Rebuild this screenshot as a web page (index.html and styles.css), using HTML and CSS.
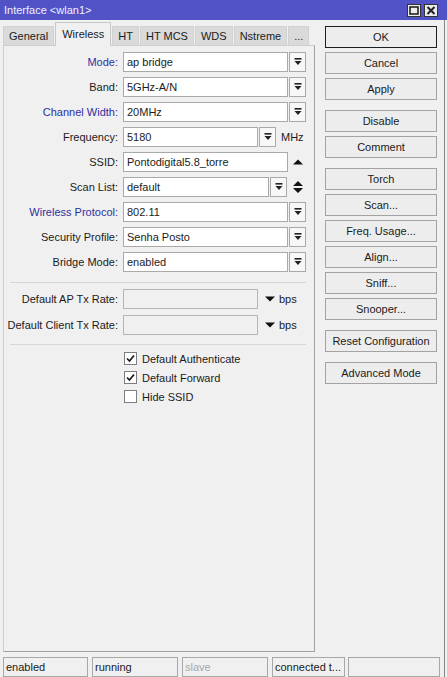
FILE: index.html
```html
<!DOCTYPE html>
<html>
<head>
<meta charset="utf-8">
<link rel="stylesheet" href="styles.css">
</head>
<body>
<div class="window">
  <div class="titlebar">
    <span class="title">Interface &lt;wlan1&gt;</span>
    <div class="tb-btns">
      <span class="tb-btn"><svg width="10" height="9" viewBox="0 0 10 9"><rect x="1" y="1" width="8" height="7" fill="none" stroke="#222" stroke-width="1.6"/></svg></span>
      <span class="tb-btn"><svg width="10" height="9" viewBox="0 0 10 9"><path d="M1.5 1 L8.5 8 M8.5 1 L1.5 8" stroke="#222" stroke-width="2"/></svg></span>
    </div>
  </div>
  <div class="content">
    <div class="main">
      <div class="left">
        <div class="tabs">
          <div class="tab">General</div>
          <div class="tab active">Wireless</div>
          <div class="tab">HT</div>
          <div class="tab">HT MCS</div>
          <div class="tab">WDS</div>
          <div class="tab">Nstreme</div>
          <div class="tab">...</div>
        </div>
        <div class="panel">
          <div class="row">
            <span class="lbl blue">Mode:</span>
            <div class="field w-full">ap bridge</div>
            <div class="dd"><svg width="8" height="8" viewBox="0 0 8 8"><rect x="0.5" y="0" width="7" height="1.6" fill="#222"/><path d="M0.5 3 H7.5 L4 7 Z" fill="#222"/></svg></div>
          </div>
          <div class="row">
            <span class="lbl">Band:</span>
            <div class="field w-full">5GHz-A/N</div>
            <div class="dd"><svg width="8" height="8" viewBox="0 0 8 8"><rect x="0.5" y="0" width="7" height="1.6" fill="#222"/><path d="M0.5 3 H7.5 L4 7 Z" fill="#222"/></svg></div>
          </div>
          <div class="row">
            <span class="lbl blue">Channel Width:</span>
            <div class="field w-full">20MHz</div>
            <div class="dd"><svg width="8" height="8" viewBox="0 0 8 8"><rect x="0.5" y="0" width="7" height="1.6" fill="#222"/><path d="M0.5 3 H7.5 L4 7 Z" fill="#222"/></svg></div>
          </div>
          <div class="row">
            <span class="lbl">Frequency:</span>
            <div class="field w-freq">5180</div>
            <div class="dd"><svg width="8" height="8" viewBox="0 0 8 8"><rect x="0.5" y="0" width="7" height="1.6" fill="#222"/><path d="M0.5 3 H7.5 L4 7 Z" fill="#222"/></svg></div>
            <span class="unit">MHz</span>
          </div>
          <div class="row">
            <span class="lbl">SSID:</span>
            <div class="field w-full">Pontodigital5.8_torre</div>
            <span class="glyph"><svg width="10" height="6" viewBox="0 0 10 6"><path d="M0 5.5 H10 L5 0.5 Z" fill="#111"/></svg></span>
          </div>
          <div class="row">
            <span class="lbl">Scan List:</span>
            <div class="field w-scan">default</div>
            <div class="dd"><svg width="8" height="8" viewBox="0 0 8 8"><rect x="0.5" y="0" width="7" height="1.6" fill="#222"/><path d="M0.5 3 H7.5 L4 7 Z" fill="#222"/></svg></div>
            <span class="glyph"><svg width="10" height="12" viewBox="0 0 10 12"><path d="M0 5 H10 L5 0 Z M0 7 H10 L5 12 Z" fill="#111"/></svg></span>
          </div>
          <div class="row">
            <span class="lbl blue">Wireless Protocol:</span>
            <div class="field w-full">802.11</div>
            <div class="dd"><svg width="8" height="8" viewBox="0 0 8 8"><rect x="0.5" y="0" width="7" height="1.6" fill="#222"/><path d="M0.5 3 H7.5 L4 7 Z" fill="#222"/></svg></div>
          </div>
          <div class="row">
            <span class="lbl">Security Profile:</span>
            <div class="field w-full">Senha Posto</div>
            <div class="dd"><svg width="8" height="8" viewBox="0 0 8 8"><rect x="0.5" y="0" width="7" height="1.6" fill="#222"/><path d="M0.5 3 H7.5 L4 7 Z" fill="#222"/></svg></div>
          </div>
          <div class="row">
            <span class="lbl">Bridge Mode:</span>
            <div class="field w-full">enabled</div>
            <div class="dd"><svg width="8" height="8" viewBox="0 0 8 8"><rect x="0.5" y="0" width="7" height="1.6" fill="#222"/><path d="M0.5 3 H7.5 L4 7 Z" fill="#222"/></svg></div>
          </div>

          <div class="sep sep1"></div>

          <div class="row rate">
            <span class="lbl">Default AP Tx Rate:</span>
            <div class="field w-freq off"></div>
            <span class="glyph down"><svg width="10" height="6" viewBox="0 0 10 6"><path d="M0 0.5 H10 L5 5.5 Z" fill="#111"/></svg></span>
            <span class="unit u-bps">bps</span>
          </div>
          <div class="row rate2">
            <span class="lbl">Default Client Tx Rate:</span>
            <div class="field w-freq off"></div>
            <span class="glyph down"><svg width="10" height="6" viewBox="0 0 10 6"><path d="M0 0.5 H10 L5 5.5 Z" fill="#111"/></svg></span>
            <span class="unit u-bps">bps</span>
          </div>

          <div class="sep sep2"></div>

          <div class="checks">
            <div class="check"><span class="box"><svg width="11" height="11" viewBox="0 0 11 11"><path d="M2 5.5 L4.5 8 L9 2.5" fill="none" stroke="#1a1a1a" stroke-width="1.7"/></svg></span>Default Authenticate</div>
            <div class="check"><span class="box"><svg width="11" height="11" viewBox="0 0 11 11"><path d="M2 5.5 L4.5 8 L9 2.5" fill="none" stroke="#1a1a1a" stroke-width="1.7"/></svg></span>Default Forward</div>
            <div class="check"><span class="box"></span>Hide SSID</div>
          </div>
        </div>
      </div>
      <div class="buttons">
        <div class="btn default">OK</div>
        <div class="btn">Cancel</div>
        <div class="btn">Apply</div>
        <div class="btn group">Disable</div>
        <div class="btn">Comment</div>
        <div class="btn group">Torch</div>
        <div class="btn">Scan...</div>
        <div class="btn">Freq. Usage...</div>
        <div class="btn">Align...</div>
        <div class="btn">Sniff...</div>
        <div class="btn">Snooper...</div>
        <div class="btn group">Reset Configuration</div>
        <div class="btn group">Advanced Mode</div>
      </div>
    </div>
    <div class="status">
      <div class="cell c1">enabled</div>
      <div class="cell c2">running</div>
      <div class="cell c3 dim">slave</div>
      <div class="cell c4">connected t...</div>
      <div class="cell c5"></div>
    </div>
  </div>
</div>
</body>
</html>
```

FILE: styles.css
```css
* { box-sizing: border-box; }
html, body { margin: 0; padding: 0; }
body {
  width: 447px;
  height: 677px;
  overflow: hidden;
  background: #f0f0f0;
  font-family: "Liberation Sans", Arial, sans-serif;
  font-size: 11px;
  color: #1b1b1b;
}
.window {
  width: 447px;
  height: 677px;
  display: flex;
  flex-direction: column;
}
.titlebar {
  flex: none;
  height: 20px;
  background: #5152c6;
  color: #eef0ff;
  display: flex;
  align-items: center;
  padding-left: 4px;
}
.title { flex: 1; }
.tb-btns {
  display: flex;
  gap: 3px;
  margin-right: 9px;
}
.tb-btn {
  width: 14px;
  height: 13px;
  background: #ececec;
  border: 1px solid #333;
  display: flex;
  align-items: center;
  justify-content: center;
}
.content {
  flex: 1;
  display: flex;
  flex-direction: column;
  margin-right: 2px;
  border-right: 1px solid #858585;
}
.main {
  height: 635px;
  display: flex;
}
.left {
  width: 312px;
  margin-left: 3px;
  margin-bottom: 3px;
  display: flex;
  flex-direction: column;
}
.tabs {
  height: 25px;
  display: flex;
  align-items: flex-end;
  position: relative;
  z-index: 1;
}
.tab {
  height: 19px;
  line-height: 18px;
  padding: 0 5px;
  margin-right: 1px;
  background: #dadada;
  border: 1px solid #d2d2d2;
  border-bottom: none;
  color: #1b1b1b;
}
.tab.active {
  height: 24px;
  line-height: 22px;
  padding: 0 6px;
  margin-bottom: -1px;
  background: #f0f0f0;
  border-color: #c8c8c8;
}
.panel {
  flex: 1;
  border: 1px solid #cfcfcf;
  border-right-color: #a2a2a2;
  border-bottom-color: #a2a2a2;
  padding-top: 6px;
}
.row {
  display: flex;
  align-items: center;
  height: 20px;
  margin-bottom: 5px;
}
.lbl {
  width: 114px;
  text-align: right;
  margin-right: 5px;
  white-space: nowrap;
}
.lbl.blue { color: #2e2ea2; }
.field {
  height: 20px;
  line-height: 18px;
  border: 1px solid #a9a9a9;
  background: #fff;
  padding-left: 3px;
  white-space: nowrap;
  overflow: hidden;
}
.field.off { background: #f0f0f0; border-color: #b4b4b4; }
.w-full { width: 165px; }
.w-freq { width: 135px; }
.w-scan { width: 146px; }
.dd {
  width: 17px;
  height: 20px;
  margin-left: 1px;
  border: 1px solid #a9a9a9;
  background: #f7f7f7;
  display: flex;
  align-items: center;
  justify-content: center;
}
.unit { margin-left: 5px; }
.glyph {
  width: 10px;
  margin-left: 5px;
  display: flex;
  align-items: center;
}
.dd + .glyph { margin-left: 6px; }
.glyph.down { margin-left: 7px; }
.u-bps { margin-left: 4px; }
.sep {
  height: 1px;
  background: #d6d6d6;
  margin: 0 8px 0 6px;
}
.sep1 { margin-top: 10px; margin-bottom: 6px; }
.rate { margin-bottom: 6px; }
.rate2 { margin-bottom: 9px; }
.sep2 { margin-top: 9px; margin-bottom: 4px; }
.checks { padding-left: 120px; }
.check {
  height: 19px;
  display: flex;
  align-items: center;
}
.box {
  width: 13px;
  height: 13px;
  border: 1px solid #7e7e7e;
  background: #fff;
  margin-right: 5px;
  display: flex;
  align-items: center;
  justify-content: center;
}
.buttons {
  width: 112px;
  margin-left: 10px;
  padding-top: 6px;
  display: flex;
  flex-direction: column;
}
.btn {
  height: 22px;
  line-height: 20px;
  margin-bottom: 4px;
  text-align: center;
  background: #ededed;
  border: 1px solid #a3a3a3;
  white-space: nowrap;
}
.btn.default { border-color: #1f1f1f; }
.btn.group { margin-top: 6px; }
.status {
  height: 22px;
  padding-top: 2px;
  padding-left: 3px;
  display: flex;
}
.cell {
  height: 20px;
  line-height: 18px;
  border: 1px solid #a8a8a8;
  padding-left: 2px;
  white-space: nowrap;
}
.c1 { width: 85px; margin-right: 4px; }
.c2 { width: 86px; margin-right: 4px; }
.c3 { width: 86px; margin-right: 4px; }
.c4 { width: 73px; margin-right: 3px; }
.c5 { width: 92px; }
.dim { color: #a6a6a6; }
```
